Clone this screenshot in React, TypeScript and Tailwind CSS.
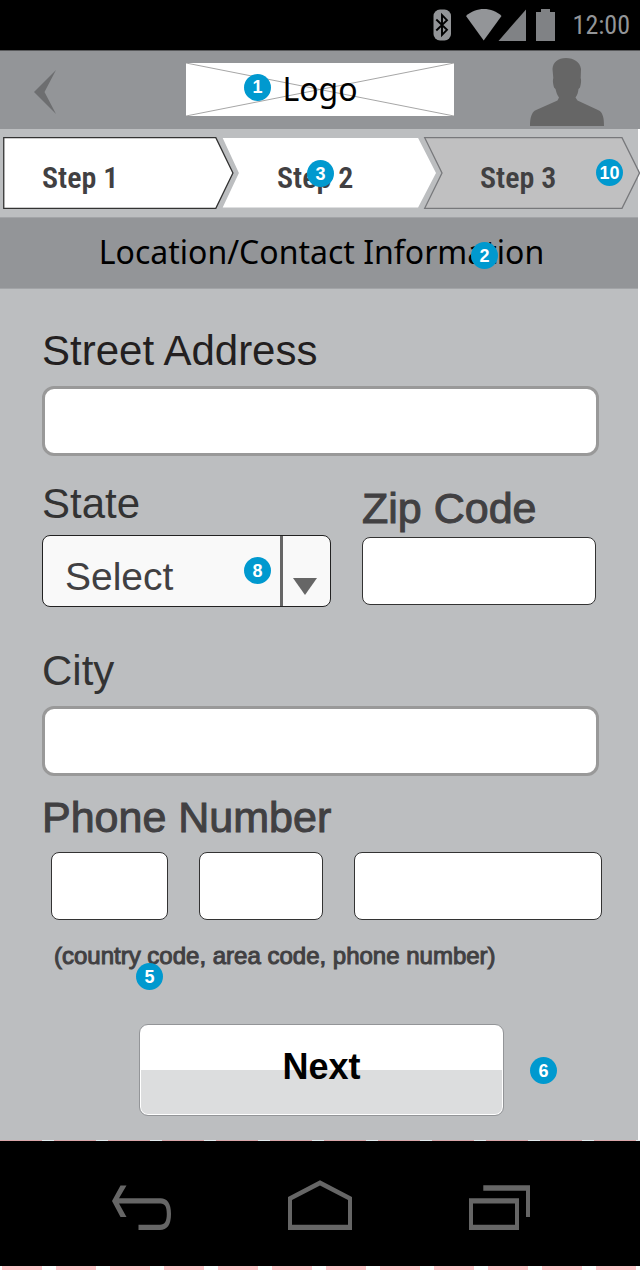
import type { ReactNode } from "react";

function Badge({ children, place }: { children: ReactNode; place: string }) {
  return (
    <span
      className={`pointer-events-none absolute z-10 flex size-[27px] items-center justify-center rounded-full bg-[#0099cf] text-[18px] leading-[20px] font-bold text-white ${place}`}
    >
      {children}
    </span>
  );
}

function StatusBar() {
  return (
    <div className="flex h-[50px] items-center justify-end bg-black pr-[10px] text-[#939598]">
      <svg width="19" height="32" viewBox="0 0 19 32" className="mr-[14px]" aria-hidden="true">
        <rect x="0.5" y="0.5" width="17.5" height="31" rx="6.500" fill="currentColor" />
        <path d="M3.300 10.500 14 20.800 9 26V6L14 11.200 3.300 21.500" fill="none" stroke="#000" strokeWidth="1.900" />
      </svg>
      <svg width="61" height="32" viewBox="0 0 61 32" className="mr-[9px]" aria-hidden="true">
        <path d="M0 7C10-2.300 26-2.300 35.500 7L17.700 31.500Z" fill="currentColor" />
        <path d="M32.500 32H60V0.500Z" fill="#808285" />
      </svg>
      <svg width="19" height="32" viewBox="0 0 19 32" className="mr-[18px]" aria-hidden="true">
        <path d="M5 0H14V3H19V32H0V3H5Z" fill="#808285" />
      </svg>
      <span className="font-['Roboto_Condensed','Liberation_Sans_Narrow','Roboto',sans-serif] text-[26px] leading-[32px]">
        12:00
      </span>
    </div>
  );
}

function Header() {
  return (
    <header className="grid h-[79px] grid-cols-[1fr_268px_1fr] items-center border-t border-[#58595b] bg-[#939598] pb-[2px]">
      <button type="button" aria-label="Back" className="justify-self-start pt-[6px] pl-[34px]">
        <svg width="22" height="44" viewBox="0 0 22 44" aria-hidden="true">
          <path d="M22 0 0 22 22 44 10.500 22Z" fill="#6d6e70" />
        </svg>
      </button>
      <div className="relative flex h-[53px] items-center justify-center bg-white">
        <svg
          className="absolute inset-0 size-full"
          viewBox="0 0 268 53"
          preserveAspectRatio="none"
          aria-hidden="true"
        >
          <path d="M0 0 268 53M0 53 268 0" stroke="#808080" strokeWidth="0.700" fill="none" />
        </svg>
        <span className="relative font-['Noto_Sans',sans-serif] text-[32px] leading-[48px] text-black">Logo</span>
        <Badge place="left-[58px] top-[11px]">1</Badge>
      </div>
      <button type="button" aria-label="Profile" className="justify-self-end pt-[6px] pr-[36px]">
        <svg width="74" height="68" viewBox="0 0 74 68" aria-hidden="true">
          <path
            d="M36 0C28 0 23 4 22.500 11L23.300 20C22.500 22 23 26 24 29.500L25.500 31C26.300 34 27 37 29 39.500L27.500 42.500 5 52.500C1.500 55 0 60 0 68H74C74 60 73 55 69 52.500L47.500 42.500 45.500 39.500C47.500 37 48.200 34 48.500 31L50 29.500C51 26 51.500 22 50.700 20L51 11C50 4 44 0 36 0Z"
            fill="#666"
          />
        </svg>
      </button>
    </header>
  );
}

function Step({
  label,
  shape,
  fill,
  stroke,
  className,
  badge,
}: {
  label: string;
  shape: string;
  fill: string;
  stroke: string;
  className: string;
  badge?: ReactNode;
}) {
  return (
    <li className={`relative flex h-[72px] items-center pt-[9px] ${className}`}>
      <svg
        className="absolute inset-0 size-full overflow-visible"
        viewBox="0 0 216 72"
        preserveAspectRatio="none"
        aria-hidden="true"
      >
        <path d={shape} fill={fill} stroke={stroke} vectorEffect="non-scaling-stroke" strokeWidth="1.300" />
      </svg>
      <a
        href="#"
        className="relative font-['Liberation_Sans_Narrow','Roboto_Condensed',sans-serif] text-[30px] leading-[40px] font-semibold whitespace-nowrap text-[#414042]"
      >
        {label}
      </a>
      {badge}
    </li>
  );
}

function Steps() {
  return (
    <ol className="-mr-[2px] grid grid-cols-[231fr_203fr_203fr] pt-[8px] pb-[8px] pl-[3px]">
      <Step
        label="Step 1"
        shape="M.7.700H199L215 36 199 71.300H.7Z"
        fill="#fff"
        stroke="#333"
        className="pl-[39px]"
      />
      <Step
        label="Step 2"
        shape="M.7 1H197L215 36 197 70.500H.7L17 36Z"
        fill="#fff"
        stroke="none"
        className="-ml-[12px] pl-[55px]"
        badge={<Badge place="left-[85px] top-[23px]">3</Badge>}
      />
      <Step
        label="Step 3"
        shape="M.7.700H198L215.500 36 198 71.300H.7L18 36Z"
        fill="#c0c0c1"
        stroke="#77787b"
        className="-ml-[13px] pl-[56px]"
        badge={<Badge place="right-[17px] top-[22px]">10</Badge>}
      />
    </ol>
  );
}

const label = "block text-[42px] leading-[48px]";
const heavyLabel = "block text-[43px] leading-[48px] text-[#414042] [-webkit-text-stroke:1px_#414042]";
const wideInput = "block h-[70px] w-full rounded-[12px] border-3 border-[#999] bg-white px-4 text-[32px] outline-none";
const thinInput =
  "block h-[68px] w-full min-w-0 rounded-[8px] border border-[#333] bg-white px-3 text-[32px] outline-none";

function ContactForm() {
  return (
    <form className="pt-[38px] pr-[39px] pb-[24px] pl-[42px]" onSubmit={(e) => e.preventDefault()}>
      <label htmlFor="street" className={`${label} text-[#231f20]`}>
        Street Address
      </label>
      <input id="street" type="text" className={`${wideInput} mt-[11px]`} />

      <div className="mt-[24px] grid grid-cols-[289fr_234fr] gap-[31px] pr-[3px]">
        <div>
          <label htmlFor="state" className={`${label} text-[#333]`}>
            State
          </label>
          <div className="relative mt-[7px]">
            <select
              id="state"
              className="block h-[72px] w-full appearance-none rounded-[8px] border border-[#222] bg-[#f9f9f9] pt-[12px] pl-[22px] text-[39px] leading-[46px] text-[#414042] outline-none"
            >
              <option>Select</option>
            </select>
            <span className="pointer-events-none absolute inset-y-px right-0 flex w-[51px] items-end border-l-3 border-[#666] pb-[11px] pl-[10px]">
              <svg width="24" height="17" viewBox="0 0 24 17" aria-hidden="true">
                <path d="M0 0H24L12 17Z" fill="#666" />
              </svg>
            </span>
            <Badge place="right-[60px] top-[22px]">8</Badge>
          </div>
        </div>
        <div className="pt-[4px]">
          <label htmlFor="zip" className={heavyLabel}>
            Zip Code
          </label>
          <input id="zip" type="text" className={`${thinInput} mt-[5px]`} />
        </div>
      </div>

      <label htmlFor="city" className={`${label} mt-[40px] text-[#333]`}>
        City
      </label>
      <input id="city" type="text" className={`${wideInput} mt-[11px]`} />

      <fieldset className="mt-[17px]">
        <legend className={heavyLabel}>Phone Number</legend>
        <div className="-mr-[3px] grid grid-cols-[117fr_124fr_248fr] gap-[31px] pt-[11px] pl-[9px]">
          <input aria-label="Country code" type="tel" className={thinInput} />
          <input aria-label="Area code" type="tel" className={thinInput} />
          <input aria-label="Phone number" type="tel" className={thinInput} />
        </div>
        <p className="relative mt-[22px] pl-[12px] text-[24px] leading-[28px] text-[#414042] [-webkit-text-stroke:1px_#414042]">
          (country code, area code, phone number)
          <Badge place="left-[94px] top-[21px] [-webkit-text-stroke:0px]">5</Badge>
        </p>
      </fieldset>

      <div className="relative mt-[54px] pr-[95px] pl-[97px]">
        <button
          type="submit"
          className="block h-[92px] w-full rounded-[9px] border border-[#939598] bg-[linear-gradient(#fff_50%,#dcddde_50%)] pb-[6px] text-[36px] leading-[40px] font-bold text-black shadow-[inset_0_0_0_1px_#fff]"
        >
          Next
        </button>
        <Badge place="right-[42px] top-[33px]">6</Badge>
      </div>
    </form>
  );
}

function NavBar() {
  return (
    <nav className="flex h-[125px] items-center justify-center gap-[117px] bg-black pt-[3px] pl-[2px] text-[#666]">
      <button type="button" aria-label="Back">
        <svg width="59" height="50" viewBox="0 0 59 50" fill="currentColor" aria-hidden="true">
          <path d="M8.500 5.500H14.500L7 18.300H48.500C55 18.300 59 23 59 34C59 45 55 50 48 50H26.500V44.700H48C53 44.700 54.800 41 54.800 34C54.800 27 53 23.600 48.500 23.600H7L14.500 37H8.500L0 21Z" />
        </svg>
      </button>
      <button type="button" aria-label="Home">
        <svg width="64" height="50" viewBox="0 0 64 50" fill="currentColor" aria-hidden="true">
          <path fillRule="evenodd" d="M0 17 32 .3 64 17V50H0ZM4 20V44.700H60V20L32 5.600Z" />
        </svg>
      </button>
      <button type="button" aria-label="Recent apps">
        <svg width="61" height="50" viewBox="0 0 61 50" fill="currentColor" aria-hidden="true">
          <path fillRule="evenodd" d="M0 18.300H50V50H0ZM4 23.600V44.700H46V23.600Z" />
          <path d="M14.300 5.300H61V37H57V10.700H14.300Z" />
        </svg>
      </button>
    </nav>
  );
}

export default function App() {
  return (
    <div className="bg-white font-['Liberation_Sans',Arial,sans-serif]">
      <StatusBar />
      <Header />
      <main className="border-r-2 border-white bg-[#bcbec0]">
        <Steps />
        <div className="relative flex h-[72px] items-center justify-center border-y border-[#a2a4a7] bg-[#939598] pb-[2px] pl-[5px]">
          <h1 className="font-['Noto_Sans',sans-serif] text-[32px] leading-[48px] whitespace-nowrap text-black">
            Location/Contact Information
          </h1>
          <Badge place="left-[471px] top-[24px]">2</Badge>
        </div>
        <ContactForm />
      </main>
      <div className="h-px bg-[repeating-linear-gradient(90deg,#d9a5a8_0px,#d9a5a8_42px,#e3ebee_42px,#e3ebee_54px)]" />
      <NavBar />
      <div className="h-[4px] bg-[repeating-linear-gradient(90deg,#fff_0px,#fff_2px,#fcc8cb_2px,#fcc8cb_42px,#fff_42px,#fff_54px)]" />
    </div>
  );
}
